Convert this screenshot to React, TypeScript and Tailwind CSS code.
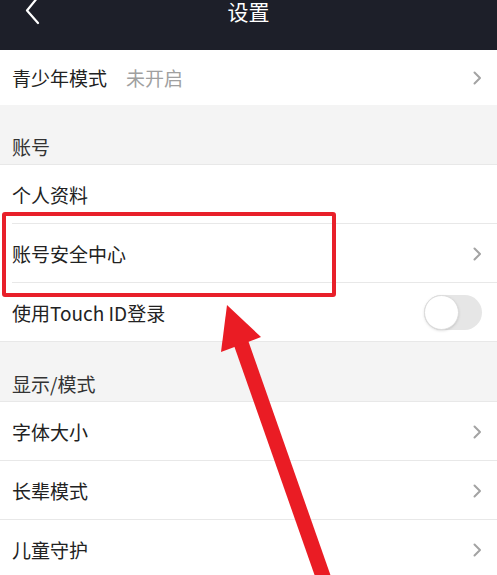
import React from "react";

const font = { fontFamily: '"Noto Sans CJK SC", "Noto Sans", sans-serif' };

const Chevron = () => (
  <svg width="9" height="14" viewBox="0 0 9 14" className="shrink-0">
    <polyline points="1.5,1.5 7,7 1.5,12.5" fill="none" stroke="#a3a3a3" strokeWidth="2" strokeLinecap="round" strokeLinejoin="round" />
  </svg>
);

const Row = ({ label, inset = false, children }: { label: string; inset?: boolean; children?: React.ReactNode }) => (
  <div className="flex h-[59px] items-center bg-white pl-3 pr-[15px] relative">
    <span className="text-[19px] leading-none text-[#222]">{label}</span>
    <div className="ml-auto flex items-center">{children ?? <Chevron />}</div>
    <div className={`absolute bottom-0 right-0 h-px bg-[#e8e8e8] ${inset ? "left-3" : "left-0"}`} />
  </div>
);

const Section = ({ title }: { title: string }) => (
  <div className="flex h-[60px] items-end bg-[#f4f4f4] pl-3 pb-[8px] border-b border-[#e8e8e8]">
    <span className="text-[19px] leading-[19px] text-[#333]">{title}</span>
  </div>
);

export default function App() {
  return (
    <div className="relative h-[575px] w-full overflow-hidden bg-white" style={font}>
      {/* Header */}
      <div className="relative flex h-[50px] justify-center bg-[#1d1f29]">
        <svg width="20" height="30" viewBox="0 0 20 30" className="absolute left-[22px] top-[-5px]">
          <polyline points="16,2 5,15.5 16,28" fill="none" stroke="#fff" strokeWidth="2.2" strokeLinecap="round" strokeLinejoin="round" />
        </svg>
        <span className="mt-0 text-[21px] leading-[22px] text-white">设置</span>
      </div>

      <div className="flex h-[55px] items-center bg-white pl-3 pr-[15px]">
        <span className="text-[19px] leading-none text-[#222]">青少年模式</span>
        <span className="ml-[19px] text-[19px] leading-none text-[#a0a0a0]">未开启</span>
        <div className="ml-auto">
          <Chevron />
        </div>
      </div>

      <Section title="账号" />
      <Row label="个人资料" inset>
        <span />
      </Row>
      <Row label="账号安全中心" inset />
      <Row label="使用Touch ID登录">
        <div className="relative h-[35px] w-[58px] rounded-full bg-[#e6e6e6]">
          <div className="absolute left-0 top-0 h-[35px] w-[35px] rounded-full border border-[#dcdcdc] bg-white shadow-sm" />
        </div>
      </Row>

      <Section title="显示/模式" />
      <Row label="字体大小" />
      <Row label="长辈模式" />
      <Row label="儿童守护" />

      {/* Annotation box */}
      <div className="absolute left-[2px] top-[212px] h-[85px] w-[334px] rounded-[3px] border-[4px] border-[#e8202a]" />

      {/* Annotation arrow */}
      <svg className="pointer-events-none absolute inset-0" width="497" height="575" viewBox="0 0 497 575">
        <line x1="240" y1="340" x2="326" y2="585" stroke="#ea1c24" strokeWidth="15" />
        <polygon points="227,305 221,352 261,337" fill="#ea1c24" />
      </svg>
    </div>
  );
}
